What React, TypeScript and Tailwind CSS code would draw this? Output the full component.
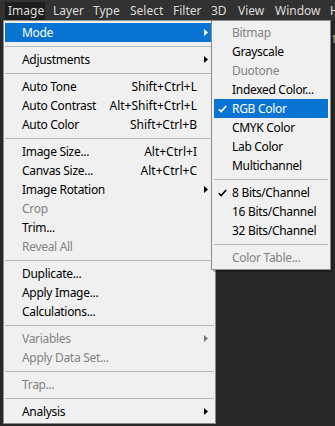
import React from "react";

type Item =
  | { sep: true }
  | { label: string; shortcut?: string; disabled?: boolean; arrow?: boolean; active?: boolean; check?: boolean };

const mainItems: Item[] = [
  { label: "Mode", arrow: true, active: true },
  { sep: true },
  { label: "Adjustments", arrow: true },
  { sep: true },
  { label: "Auto Tone", shortcut: "Shift+Ctrl+L" },
  { label: "Auto Contrast", shortcut: "Alt+Shift+Ctrl+L" },
  { label: "Auto Color", shortcut: "Shift+Ctrl+B" },
  { sep: true },
  { label: "Image Size...", shortcut: "Alt+Ctrl+I" },
  { label: "Canvas Size...", shortcut: "Alt+Ctrl+C" },
  { label: "Image Rotation", arrow: true },
  { label: "Crop", disabled: true },
  { label: "Trim..." },
  { label: "Reveal All", disabled: true },
  { sep: true },
  { label: "Duplicate..." },
  { label: "Apply Image..." },
  { label: "Calculations..." },
  { sep: true },
  { label: "Variables", disabled: true, arrow: true },
  { label: "Apply Data Set...", disabled: true },
  { sep: true },
  { label: "Trap...", disabled: true },
  { sep: true },
  { label: "Analysis", arrow: true },
];

const subItems: Item[] = [
  { label: "Bitmap", disabled: true },
  { label: "Grayscale" },
  { label: "Duotone", disabled: true },
  { label: "Indexed Color..." },
  { label: "RGB Color", check: true, active: true },
  { label: "CMYK Color" },
  { label: "Lab Color" },
  { label: "Multichannel" },
  { sep: true },
  { label: "8 Bits/Channel", check: true },
  { label: "16 Bits/Channel" },
  { label: "32 Bits/Channel" },
  { sep: true },
  { label: "Color Table...", disabled: true },
];

const font = { fontFamily: '"Noto Sans", "Open Sans", sans-serif' };

function Arrow({ white, disabled }: { white?: boolean; disabled?: boolean }) {
  return (
    <svg width="4" height="7" viewBox="0 0 4 7" className="absolute right-[6px] top-[6px]">
      <path d="M0 0 L4 3.5 L0 7 Z" fill={white ? "#ffffff" : disabled ? "#7a7a7a" : "#000000"} />
    </svg>
  );
}

function Check({ white }: { white?: boolean }) {
  return (
    <svg width="9" height="8" viewBox="0 0 9 8" className="absolute left-[4px] top-[6px]">
      <path d="M0.8 4.2 L3.2 6.6 L8.2 1" stroke={white ? "#ffffff" : "#000000"} strokeWidth="1.6" fill="none" />
    </svg>
  );
}

const menuBar = [
  { t: "Image", w: "w-[40px] mr-[5px] bg-[#1e1e1e]" },
  { t: "Layer", w: "w-[40px]" },
  { t: "Type", w: "w-[37px]" },
  { t: "Select", w: "w-[43px]" },
  { t: "Filter", w: "w-[38px]" },
  { t: "3D", w: "w-[27px]" },
  { t: "View", w: "w-[37px]" },
  { t: "Window", w: "w-[55px]" },
  { t: "H", w: "w-[10px]" },
];

function MenuRow({ it, sub }: { it: Exclude<Item, { sep: true }>; sub?: boolean }) {
  return (
    <div
      className={`relative h-[19px] flex items-center leading-none ${sub ? "pl-[18px]" : "px-[17px]"} ${
        it.active ? "bg-[#0a74d2] text-white" : it.disabled ? "text-[#838383]" : "text-black"
      }`}
    >
      {it.check && <Check white={it.active} />}
      <span className="whitespace-nowrap tracking-[-0.3px]">{it.label}</span>
      {it.shortcut && <span className="ml-auto whitespace-nowrap">{it.shortcut}</span>}
      {it.arrow && <Arrow white={it.active} disabled={it.disabled} />}
    </div>
  );
}

function Sep() {
  return (
    <div className="h-[8px] flex items-center">
      <div className="h-[1px] w-full bg-[#b9b9b9]" />
    </div>
  );
}

export default function App() {
  return (
    <div className="relative w-[335px] h-[426px] overflow-hidden bg-[#282828] text-[12px]" style={font}>
      {/* menu bar */}
      <div className="flex h-[20px] bg-[#323232] pl-[5px] pt-[2px] overflow-hidden">
        {menuBar.map((m) => (
          <div
            key={m.t}
            className={`${m.w} shrink-0 h-[18px] pl-[3px] flex items-center text-[12px] leading-none text-[#dcdcdc]`}
          >
            {m.t}
          </div>
        ))}
      </div>
      {/* background hints */}
      <div className="absolute left-[331px] top-[34px] text-[10px] leading-none text-[#bbbbbb]">1</div>
      <div className="absolute left-[214px] top-[103px] w-[2px] h-[12px] bg-[#1a73d0]" />

      {/* main menu */}
      <div className="absolute left-[3px] top-[20px] w-[213px] bg-[#f0f0f0] border border-[#8c8c8c] px-[1px] py-[2px]">
        {mainItems.map((it, i) => ("sep" in it ? <Sep key={i} /> : <MenuRow key={i} it={it} />))}
      </div>

      {/* submenu */}
      <div className="absolute left-[211px] top-[20px] w-[120px] bg-[#f0f0f0] border border-[#8c8c8c] px-[2px] py-[2px] shadow-[2px_2px_0_rgba(0,0,0,0.25)]">
        {subItems.map((it, i) => ("sep" in it ? <Sep key={i} /> : <MenuRow key={i} it={it} sub />))}
      </div>
    </div>
  );
}
